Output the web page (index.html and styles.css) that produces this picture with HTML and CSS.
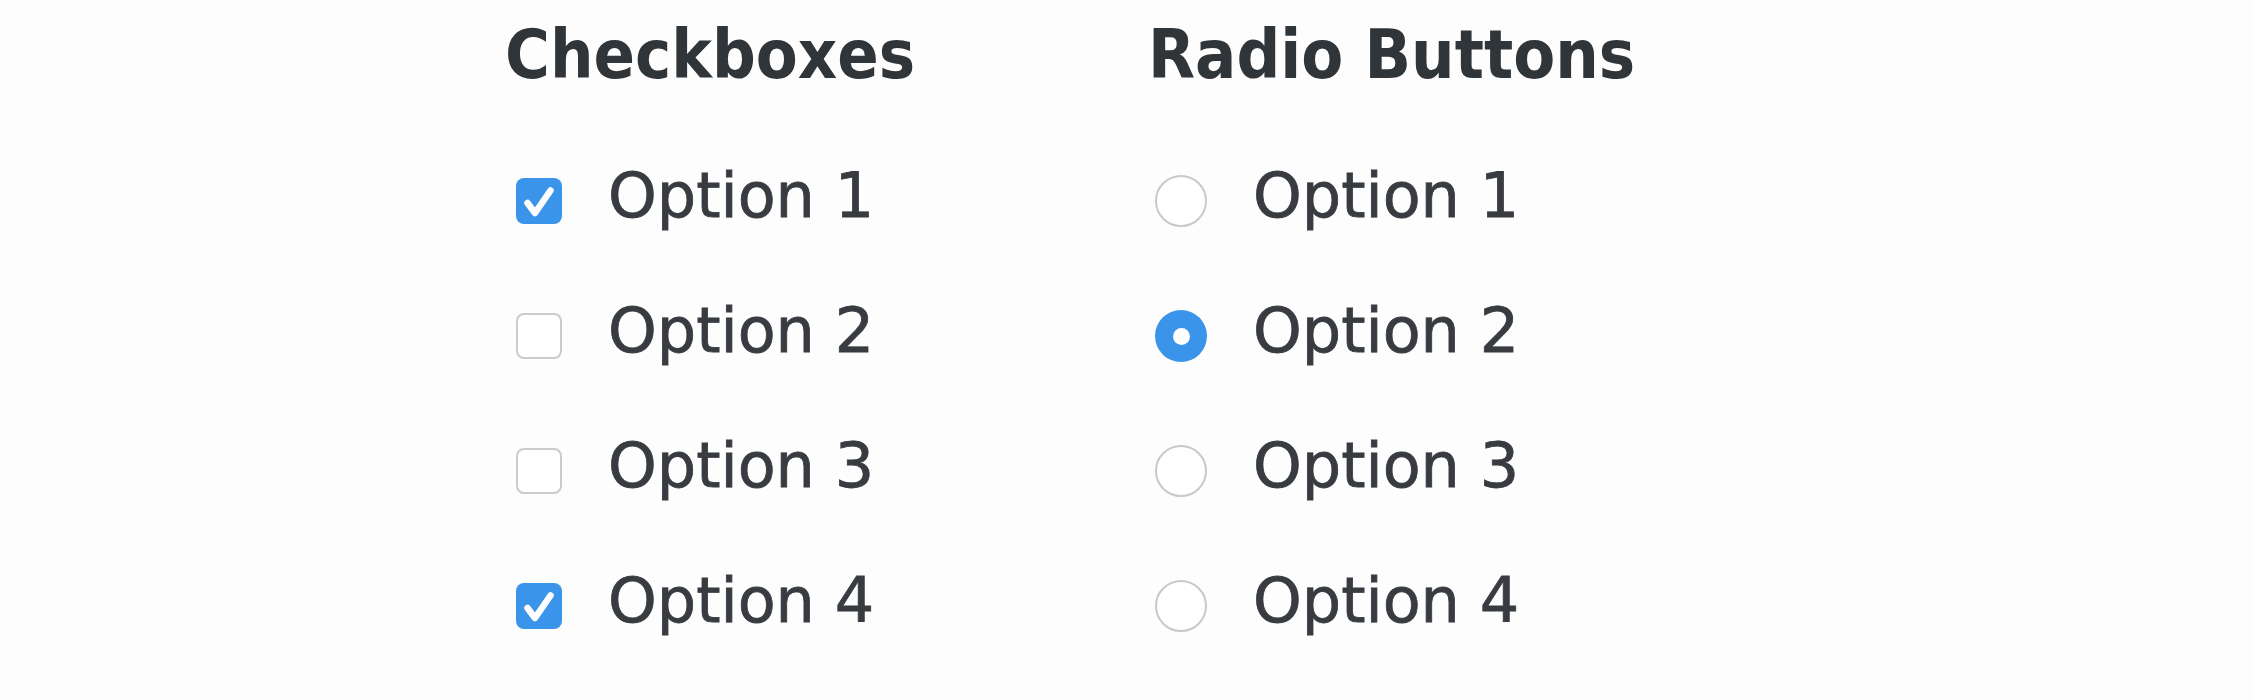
FILE: index.html
```html
<!DOCTYPE html>
<html lang="en">
<head>
<meta charset="utf-8">
<title>Checkboxes and Radio Buttons</title>
<link rel="stylesheet" href="styles.css">
</head>
<body>
<div class="page">
  <section class="group group-checks">
    <h2 class="title">Checkboxes</h2>
    <ul class="list">
      <li class="item"><span class="box checked"><svg viewBox="0 0 46 46" class="tick"><path d="M11.5 25 L19 35 L34.5 12.5" /></svg></span><span class="label">Option 1</span></li>
      <li class="item"><span class="box"></span><span class="label">Option 2</span></li>
      <li class="item"><span class="box"></span><span class="label">Option 3</span></li>
      <li class="item"><span class="box checked"><svg viewBox="0 0 46 46" class="tick"><path d="M11.5 25 L19 35 L34.5 12.5" /></svg></span><span class="label">Option 4</span></li>
    </ul>
  </section>
  <section class="group">
    <h2 class="title">Radio Buttons</h2>
    <ul class="list">
      <li class="item"><span class="radio"></span><span class="label">Option 1</span></li>
      <li class="item"><span class="radio selected"></span><span class="label">Option 2</span></li>
      <li class="item"><span class="radio"></span><span class="label">Option 3</span></li>
      <li class="item"><span class="radio"></span><span class="label">Option 4</span></li>
    </ul>
  </section>
</div>
</body>
</html>
```

FILE: styles.css
```css
html, body {
  margin: 0;
  padding: 0;
  background: #fdfdfd;
}

body {
  font-family: "DejaVu Sans", "Liberation Sans", sans-serif;
  color: #383b40;
  width: 2254px;
  height: 700px;
  overflow: hidden;
}

.page {
  display: flex;
  padding: 17px 0 0 505px;
}

.group-checks {
  width: 643px;
  flex: none;
}

.title {
  margin: 0;
  font-family: "DejaVu Sans Condensed", "DejaVu Sans", sans-serif;
  font-stretch: condensed;
  font-size: 68px;
  line-height: 76px;
  font-weight: bold;
  color: #30353a;
}

.list {
  list-style: none;
  margin: 67px 0 0 0;
  padding: 0;
  display: flex;
  flex-direction: column;
  gap: 63px;
}

.item {
  display: flex;
  align-items: center;
  height: 72px;
  padding-left: 11px;
}

.label {
  font-size: 62px;
  line-height: 72px;
  margin-left: 46px;
  -webkit-text-stroke: 0.8px #383b40;
}

.box {
  width: 46px;
  height: 46px;
  box-sizing: border-box;
  border: 2.5px solid #cbcbcb;
  border-radius: 8px;
  background: #ffffff;
  margin-top: 10px;
  flex: none;
  display: flex;
}

.box.checked {
  border: none;
  background: #3a95ea;
}

.tick {
  width: 46px;
  height: 46px;
}

.tick path {
  fill: none;
  stroke: #ffffff;
  stroke-width: 6.5;
  stroke-linecap: round;
  stroke-linejoin: round;
}

.radio {
  width: 52px;
  height: 52px;
  box-sizing: border-box;
  border: 2.5px solid #c9c9c9;
  border-radius: 50%;
  background: #ffffff;
  margin-top: 10px;
  margin-left: -4px;
  flex: none;
  display: flex;
  align-items: center;
  justify-content: center;
}

.radio.selected {
  border: none;
  background: #3a95ea;
}

.radio.selected::after {
  content: "";
  width: 17px;
  height: 17px;
  border-radius: 50%;
  background: #ffffff;
}
```
